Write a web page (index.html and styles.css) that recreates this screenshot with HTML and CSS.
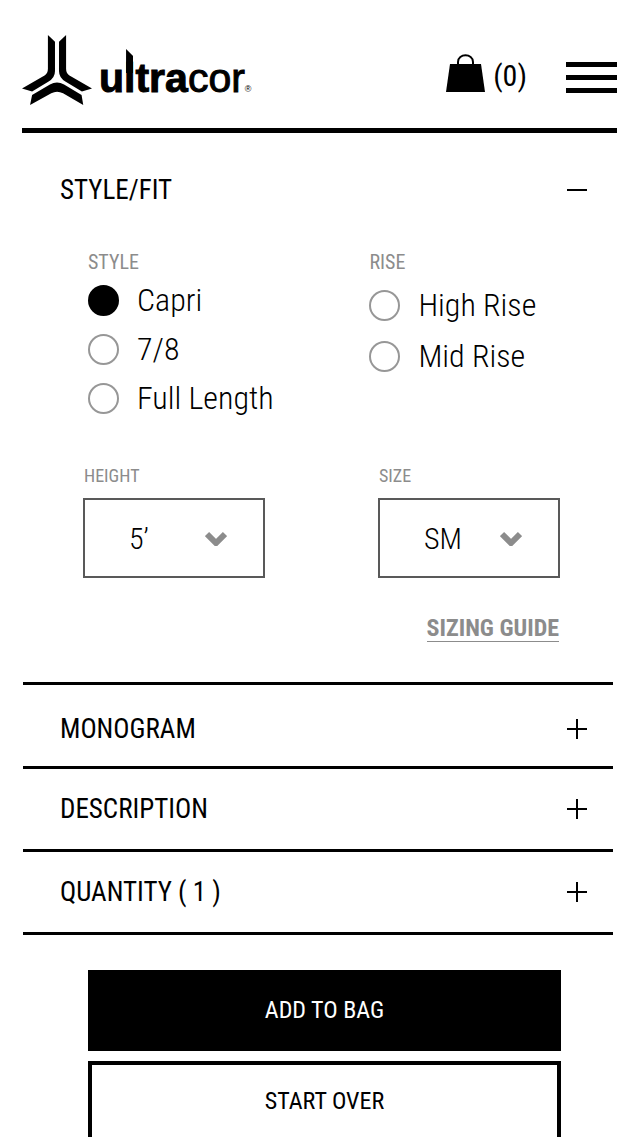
FILE: index.html
```html
<!DOCTYPE html>
<html lang="en">
<head>
<meta charset="utf-8">
<meta name="viewport" content="width=device-width, initial-scale=1">
<title>Ultracor</title>
<link rel="stylesheet" href="styles.css">
</head>
<body>
<header class="header">
  <a class="brand" href="#">
    <svg class="brand-mark" viewBox="38 30 208 208" aria-hidden="true">
      <path d="M115 30L136 50V138Q136 158 116 169L68 198L38 189L105 150Q115 144 115 130Z"/>
      <path d="M169 30L148 50V138Q148 158 168 169L216 198L246 189L179 150Q169 144 169 130Z"/>
      <path d="M68 208L121 177Q142 166 163 177L215 208L220 238L160 203Q142 194 125 203L62 238Z"/>
    </svg>
    <span class="brand-name"><b>u<span class="brand-l">l</span>tra</b>cor<small>®</small></span>
  </a>
  <nav class="actions">
    <a class="bag" href="#">
      <svg class="bag-icon" viewBox="0 0 39 39" aria-hidden="true">
        <path d="M4 10H35L39 38H0Z"/>
        <path d="M12 12V8C12 -1 27 -1 27 8V12" fill="none" stroke="#000" stroke-width="2"/>
      </svg>
      <span>(0)</span>
    </a>
    <button class="menu" type="button" aria-label="Menu"><i></i><i></i><i></i></button>
  </nav>
</header>

<main class="main">
  <section class="panel panel-open">
    <button class="panel-head" type="button" aria-expanded="true">STYLE/FIT <span class="sign sign-minus"></span></button>
    <form class="fit">
      <div class="choices">
        <fieldset class="group">
          <legend>STYLE</legend>
          <label class="choice"><input type="radio" name="style" checked>Capri</label>
          <label class="choice"><input type="radio" name="style">7/8</label>
          <label class="choice"><input type="radio" name="style">Full Length</label>
        </fieldset>
        <fieldset class="group group-rise">
          <legend>RISE</legend>
          <label class="choice"><input type="radio" name="rise">High Rise</label>
          <label class="choice"><input type="radio" name="rise">Mid Rise</label>
        </fieldset>
      </div>
      <div class="measures">
        <div class="field">
          <label for="height">HEIGHT</label>
          <div class="drop">
            <select id="height"><option>5’</option></select>
            <svg viewBox="0 0 22 15" aria-hidden="true"><path d="M2 3L11 12L20 3"/></svg>
          </div>
        </div>
        <div class="field">
          <label for="size">SIZE</label>
          <div class="drop">
            <select id="size"><option>SM</option></select>
            <svg viewBox="0 0 22 15" aria-hidden="true"><path d="M2 3L11 12L20 3"/></svg>
          </div>
        </div>
      </div>
      <a class="guide" href="#">SIZING GUIDE</a>
    </form>
  </section>
  <section class="panel panel-first"><button class="panel-head" type="button" aria-expanded="false">MONOGRAM <span class="sign"></span></button></section>
  <section class="panel"><button class="panel-head" type="button" aria-expanded="false">DESCRIPTION <span class="sign"></span></button></section>
  <section class="panel"><button class="panel-head" type="button" aria-expanded="false">QUANTITY ( 1 ) <span class="sign"></span></button></section>
  <div class="buttons">
    <button class="btn btn-dark" type="button">ADD TO BAG</button>
    <button class="btn" type="button">START OVER</button>
  </div>
</main>
</body>
</html>
```
FILE: styles.css
```css
* { box-sizing: border-box; }
body {
  margin: 0;
  background: #fff;
  color: #000;
  font-family: "Roboto Condensed", Roboto, sans-serif;
}
a { color: inherit; text-decoration: none; }
button, select { font: inherit; color: inherit; border: 0; border-radius: 0; background: none; padding: 0; }

.header {
  display: flex;
  justify-content: space-between;
  align-items: flex-start;
  height: 133px;
  margin: 0 23px 0 22px;
  border-bottom: 5px solid #000;
}
.brand { display: flex; align-items: flex-start; gap: 7px; padding-top: 35px; }
.brand-mark { width: 70px; height: 70px; }
.brand-name {
  font: 41px/48px "Liberation Sans", Arial, sans-serif;
  padding-top: 19px;
  -webkit-text-stroke: 1px #000;
}
.brand-name small { font-size: 9px; -webkit-text-stroke: 0; }
.brand-l { position: relative; }
.brand-l::before {
  content: "";
  position: absolute;
  left: 2px;
  top: -6px;
  width: 7px;
  height: 24px;
  background: #000;
  clip-path: polygon(0 0, 100% 7px, 100% 100%, 0 100%);
}
.actions { display: flex; gap: 39px; padding-top: 54px; }
.bag { display: flex; gap: 8px; font-size: 30px; line-height: 44px; }
.bag-icon { width: 39px; height: 39px; }
.menu { display: flex; flex-direction: column; gap: 8px; width: 51px; padding-top: 8px; }
.menu i { width: 100%; height: 5px; background: #000; }

.main { margin: 0 27px 0 23px; }
.panel { border-bottom: 3px solid #000; }
.panel-head {
  display: flex;
  justify-content: space-between;
  align-items: center;
  width: 100%;
  height: 80px;
  padding: 0 26px 0 37px;
  font-size: 27px;
}
.panel-first .panel-head { height: 81px; padding-top: 6px; }
.panel-open { padding: 17px 0 40px; }
.sign {
  width: 20px;
  height: 20px;
  background:
    linear-gradient(#000, #000) center / 20px 2px no-repeat,
    linear-gradient(#000, #000) center / 2px 20px no-repeat;
}
.sign-minus { background: linear-gradient(#000, #000) center / 20px 2px no-repeat; }

.fit { display: flex; flex-direction: column; padding: 20px 54px 0 60px; }
.choices { display: grid; grid-template-columns: 3fr 2fr; padding: 0 2px 0 5px; }
.group { margin: 0; padding: 0; border: 0; min-width: 0; }
.group legend { padding: 0; font-size: 20px; line-height: 24px; color: #8c8c8c; margin-bottom: 2px; }
.group-rise legend { margin-bottom: 6px; }
.choice { display: flex; align-items: center; gap: 18px; height: 49px; font-size: 32px; line-height: 36px; font-weight: 300; white-space: nowrap; padding-bottom: 2px; }
.group-rise .choice { height: 51px; }
.choice input {
  appearance: none;
  flex: none;
  width: 31px;
  height: 31px;
  margin: 2px 0 0;
  border: 2px solid #979797;
  border-radius: 50%;
}
.choice input:checked { background: #000; border-color: #000; }
.measures { display: flex; justify-content: space-between; padding-top: 42px; margin-right: -1px; }
.field { width: 182px; }
.field label { display: block; font-size: 18px; line-height: 22px; color: #8c8c8c; padding-bottom: 11px; padding-left: 1px; }
.drop { display: grid; align-items: center; }
.drop select {
  grid-area: 1 / 1;
  appearance: none;
  width: 100%;
  height: 80px;
  padding-left: 44px;
  border: 2px solid #595959;
  font-size: 30px;
  font-weight: 300;
}
.drop svg {
  grid-area: 1 / 1;
  justify-self: end;
  width: 22px;
  height: 15px;
  margin-right: 38px;
  fill: none;
  stroke: #8c8c8c;
  stroke-width: 6;
  pointer-events: none;
}
.guide {
  align-self: flex-end;
  margin-top: 38px;
  font-size: 24px;
  line-height: 25px;
  font-weight: 700;
  color: #8c8c8c;
  border-bottom: 1px solid #8c8c8c;
}
.buttons { display: flex; flex-direction: column; gap: 10px; padding: 35px 52px 0 65px; }
.btn { height: 81px; padding-bottom: 2px; border: 4px solid #000; font-size: 24px; }
.btn-dark { background: #000; color: #fff; }
```
